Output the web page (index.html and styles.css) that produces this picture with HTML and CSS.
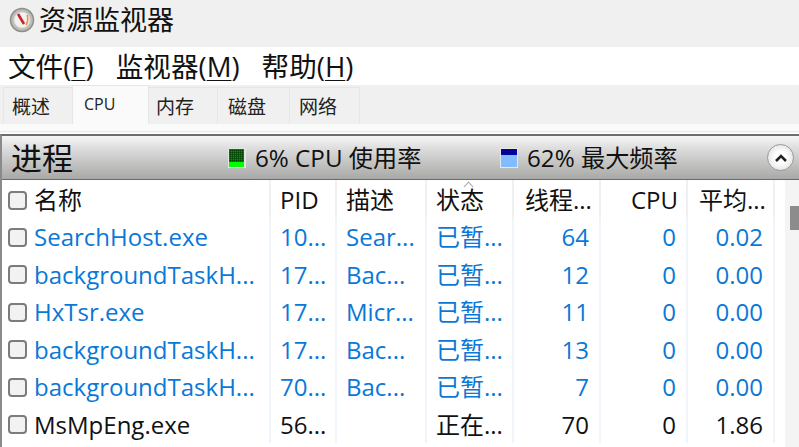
FILE: index.html
```html
<!DOCTYPE html>
<html lang="zh">
<head>
<meta charset="utf-8">
<title>资源监视器</title>
<link rel="stylesheet" href="styles.css">
</head>
<body>
<div class="window">
  <header class="titlebar">
    <svg class="appicon" width="26" height="26" viewBox="0 0 26 26">
      <circle cx="13" cy="13" r="11.5" fill="#bdbdb8" stroke="#8e8e8a" stroke-width="1.5"/>
      <circle cx="13" cy="13" r="8" fill="#f4f2ee" stroke="#d8d8d4"/>
      <path d="M9 7 L15 17" stroke="#c8222e" stroke-width="2.6"/>
      <path d="M18 8 Q20 13 17 18" stroke="#e8924a" stroke-width="1.6" fill="none"/>
    </svg>
    <span class="apptitle">资源监视器</span>
  </header>
  <nav class="menubar">
    <span>文件(<u>F</u>)</span>
    <span>监视器(<u>M</u>)</span>
    <span>帮助(<u>H</u>)</span>
  </nav>
  <div class="tabs">
    <span class="tab t1">概述</span>
    <span class="tab t2 active">CPU</span>
    <span class="tab t3">内存</span>
    <span class="tab t4">磁盘</span>
    <span class="tab t5">网络</span>
  </div>
  <div class="strip"></div>
  <section class="panel">
    <div class="panelhead">
      <span class="paneltitle">进程</span>
      <span class="stat s1">
        <svg class="meter" width="18" height="20" viewBox="0 0 18 20">
          <rect width="18" height="20" fill="#e4e4e4"/>
          <rect x="1" y="1" width="15" height="18" fill="#00ff00"/>
          <rect x="1" y="1" width="15" height="13" fill="#009400"/>
          <path d="M2.5 1V14M4.5 1V14M6.5 1V14M8.5 1V14M10.5 1V14M12.5 1V14M14.5 1V14M1 2.5H16M1 4.5H16M1 6.5H16M1 8.5H16M1 10.5H16M1 12.5H16" stroke="#003000" stroke-width="0.5"/>
        </svg>
        6% CPU 使用率
      </span>
      <span class="stat s2">
        <svg class="meter" width="18" height="20" viewBox="0 0 18 20">
          <rect width="18" height="20" fill="#e8e8e8"/>
          <rect x="1" y="1" width="16" height="18" fill="#80bcff"/>
          <rect x="1" y="1" width="16" height="6" fill="#0000e0"/>
          <path d="M2.5 1V7M4.5 1V7M6.5 1V7M8.5 1V7M10.5 1V7M12.5 1V7M14.5 1V7M1 2.5H17M1 4.5H17" stroke="#000070" stroke-width="0.5"/>
        </svg>
        62% 最大频率
      </span>
      <span class="collapse">
        <svg width="14" height="10" viewBox="0 0 14 10"><path d="M2 8 L7 3 L12 8" fill="none" stroke="#222" stroke-width="2.6"/></svg>
      </span>
    </div>
    <div class="table">
      <div class="row head">
        <div class="cell name"><i class="check"></i>名称</div>
        <div class="cell">PID</div>
        <div class="cell">描述</div>
        <div class="cell sorted">状态</div>
        <div class="cell ellip">线程...</div>
        <div class="cell num">CPU</div>
        <div class="cell ellip">平均...</div>
      </div>
      <div class="row blue">
        <div class="cell name"><i class="check"></i>SearchHost.exe</div>
        <div class="cell">10...</div><div class="cell">Sear...</div><div class="cell">已暂...</div>
        <div class="cell num">64</div><div class="cell num">0</div><div class="cell num">0.02</div>
      </div>
      <div class="row blue">
        <div class="cell name"><i class="check"></i>backgroundTaskH...</div>
        <div class="cell">17...</div><div class="cell">Bac...</div><div class="cell">已暂...</div>
        <div class="cell num">12</div><div class="cell num">0</div><div class="cell num">0.00</div>
      </div>
      <div class="row blue">
        <div class="cell name"><i class="check"></i>HxTsr.exe</div>
        <div class="cell">17...</div><div class="cell">Micr...</div><div class="cell">已暂...</div>
        <div class="cell num">11</div><div class="cell num">0</div><div class="cell num">0.00</div>
      </div>
      <div class="row blue">
        <div class="cell name"><i class="check"></i>backgroundTaskH...</div>
        <div class="cell">17...</div><div class="cell">Bac...</div><div class="cell">已暂...</div>
        <div class="cell num">13</div><div class="cell num">0</div><div class="cell num">0.00</div>
      </div>
      <div class="row blue">
        <div class="cell name"><i class="check"></i>backgroundTaskH...</div>
        <div class="cell">70...</div><div class="cell">Bac...</div><div class="cell">已暂...</div>
        <div class="cell num">7</div><div class="cell num">0</div><div class="cell num">0.00</div>
      </div>
      <div class="row">
        <div class="cell name"><i class="check"></i>MsMpEng.exe</div>
        <div class="cell">56...</div><div class="cell"></div><div class="cell">正在...</div>
        <div class="cell num">70</div><div class="cell num">0</div><div class="cell num">1.86</div>
      </div>
    </div>
    <div class="scrolltrack"><div class="scrollthumb"></div></div>
  </section>
</div>
</body>
</html>
```
FILE: styles.css
```css
* { box-sizing: border-box; }
html, body { margin: 0; padding: 0; height: 100%; overflow: hidden; background: #fff; }
.window {
  width: 799px; height: 447px; overflow: hidden; position: relative;
  font-family: "Open Sans", "Noto Sans CJK SC", sans-serif;
  font-size: 24px; color: #111;
}
.titlebar {
  height: 47px; background: #f0f0f0; display: flex; align-items: center;
  padding: 0 0 7px 9px; gap: 4px;
}
.apptitle { font-size: 27px; line-height: 36px; }
.menubar {
  height: 38px; background: #fff; display: flex; align-items: center;
  padding-left: 8px; gap: 22px; font-size: 27.6px; line-height: 34px;
}
.menubar u { text-underline-offset: 3px; text-decoration-thickness: 1px; }
.tabs {
  height: 39px; background: #f0f0f0; display: flex; align-items: flex-end;
  padding-left: 3px;
}
.tab {
  height: 37px; border: 1px solid #e6e6e6; border-bottom: 0; background: #f0f0f0;
  font-size: 19px; line-height: 37px; display: block; color: #222;
  margin-left: -1px; padding: 1px 0 0 8px;
}
.t1 { width: 70px; margin-left: 0; }
.t2 { width: 77px; font-size: 16px; padding-left: 11px; }
.t3 { width: 70px; padding-left: 7px; }
.t4 { width: 73px; padding-left: 10px; }
.t5 { width: 71px; padding-left: 9px; }
.tab.active { height: 39px; background: #fafafa; padding-top: 0; line-height: 36px; position: relative; z-index: 1; }
.strip { height: 10px; background: linear-gradient(#fafafa 0, #fafafa 7px, #e4e4e4 7px, #fff 9px); }
.panel { position: relative; border-left: 2px solid #8a8a8a; border-top: 2px solid #6e6e6e; height: 313px; background: #fff; }
.panelhead {
  height: 44px; display: flex; align-items: center; position: relative;
  background: linear-gradient(#f6f6f6 0, #dcdcdc 30%, #a8a8a6 100%);
  border-bottom: 1px solid #6a6a6a;
}
.paneltitle { font-size: 31px; line-height: 40px; padding-left: 9px; width: 226px; flex: none; }
.stat { display: flex; align-items: center; gap: 9px; font-size: 24.2px; line-height: 32px; flex: none; }
.s1 { width: 272px; }
.s2 { width: 267px; }
.meter { flex: none; }
.collapse {
  width: 27px; height: 27px; border-radius: 50%; border: 1px solid #9a9a9a;
  background: radial-gradient(#fff 30%, #d8d8d8 100%);
  display: flex; align-items: center; justify-content: center; flex: none;
}
.table { width: 773px; }
.row {
  display: grid; grid-template-columns: 269px 66px 90px 87px 87px 87px 87px;
  height: 37.5px; font-size: 24px;
}
.row.blue { color: #0a78d7; }
.row.head { height: 38px; color: #111; }
.cell {
  border-right: 2px solid #eff5fb; padding: 1px 5px 0 9px; display: flex; align-items: center;
  white-space: nowrap; overflow: hidden; line-height: 32px;
}
.row.head .cell { border-right-color: #f0f0f0; padding-top: 2px; }
.name { padding-left: 6px; gap: 7px; }
.num { justify-content: flex-end; padding-right: 10px; }
.row.head .num { padding-right: 8px; }
.ellip { padding-left: 11px; }
.sorted { position: relative; }
.sorted::before {
  content: ""; position: absolute; left: 38px; top: 3px; width: 6px; height: 6px;
  border-left: 1px solid #aaa; border-top: 1px solid #aaa; transform: rotate(45deg);
}
.check {
  display: block; width: 19px; height: 19px; flex: none;
  border: 2px solid #7c7c7c; border-radius: 4px; background: #f2f2f2;
}
.scrolltrack { position: absolute; right: 0; top: 44px; width: 14px; bottom: 0; background: #f4f4f4; }
.scrollthumb { position: absolute; right: 0; top: 26px; width: 9px; height: 24px; background: #8c8c8c; }
```
